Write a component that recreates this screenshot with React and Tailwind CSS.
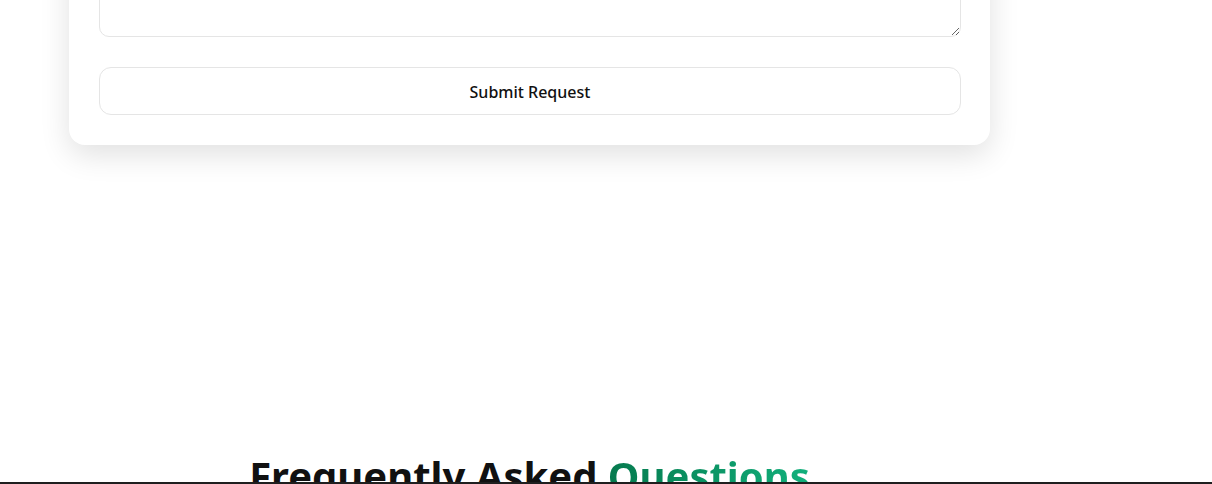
export default function App() {
  return (
    <div
      className="relative h-[484px] w-[1212px] overflow-hidden bg-white"
      style={{ fontFamily: '"Noto Sans", "Open Sans", sans-serif' }}
    >
      <div className="ml-[69px] w-[921px]">
        <div className="-mt-[113px] rounded-2xl bg-white p-[30px] pr-[29px] shadow-[0_10px_30px_rgba(0,0,0,0.12)]">
          <textarea className="block h-[120px] w-full rounded-[10px] border border-[#e5e5e5] bg-white px-3 py-2 outline-none" />
          <button className="mt-[30px] flex h-12 w-full items-center justify-center rounded-xl border border-[#e5e5e5] bg-white pt-[2px] text-[16px] font-medium text-[#111]">
            Submit Request
          </button>
        </div>
        <h2 className="mt-[311px] text-center text-[40px] font-bold leading-none text-[#111]">
          Frequently Asked{" "}
          <span className="bg-gradient-to-r from-[#067a4e] to-[#12b07c] bg-clip-text text-transparent">
            Questions
          </span>
        </h2>
      </div>
      <div className="absolute bottom-0 left-0 h-[2px] w-full bg-[#1f1f1f]" />
    </div>
  );
}
